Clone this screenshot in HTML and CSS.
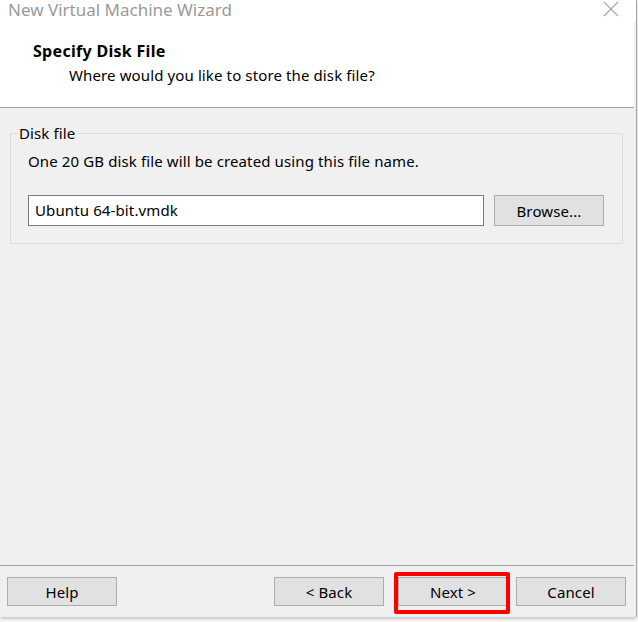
FILE: index.html
```html
<!DOCTYPE html>
<html>
<head>
<meta charset="utf-8">
<link rel="stylesheet" href="styles.css">
</head>
<body>
<div class="window">
  <div class="titlebar">
    <span class="title">New Virtual Machine Wizard</span>
    <svg class="close" width="16" height="16" viewBox="0 0 16 16"><path d="M1 1L15 15M15 1L1 15" stroke="#a6a6a6" stroke-width="1.1" fill="none"/></svg>
  </div>
  <div class="header">
    <div class="h1">Specify Disk File</div>
    <div class="sub">Where would you like to store the disk file?</div>
  </div>
  <div class="content">
    <div class="group">
      <div class="legend">Disk file</div>
      <div class="desc">One 20 GB disk file will be created using this file name.</div>
      <div class="row">
        <div class="input">Ubuntu 64-bit.vmdk</div>
        <div class="btn browse">Browse...</div>
      </div>
    </div>
  </div>
  <div class="footer">
    <div class="btn">Help</div>
    <div class="spacer"></div>
    <div class="btn">&lt; Back</div>
    <div class="btn next">Next &gt;<span class="highlight"></span></div>
    <div class="btn">Cancel</div>
  </div>
</div>
</body>
</html>
```

FILE: styles.css
```css
html, body {
  margin: 0;
  padding: 0;
  background: #ffffff;
}
body {
  font-family: "Noto Sans", "Open Sans", sans-serif;
  font-size: 15px;
  letter-spacing: 0.12px;
  color: #000;
  width: 638px;
  height: 622px;
  overflow: hidden;
}
.window {
  width: 636px;
  height: 617px;
  border-right: 1px solid #a8a8a8;
  background: #f0f0f0;
  display: flex;
  flex-direction: column;
  box-shadow: 0 2px 4px rgba(0,0,0,0.25);
  position: relative;
}
.titlebar {
  height: 22px;
  background: #fff;
  display: flex;
  align-items: flex-start;
  position: relative;
}
.title {
  font-size: 17px;
  line-height: 20px;
  letter-spacing: 0;
  color: #9a9a9a;
  margin-left: 8px;
}
.close {
  position: absolute;
  left: 603px;
  top: 1px;
}
.header {
  height: 86px;
  background: #fff;
  border-bottom: 1px solid #a0a0a0;
  margin-right: 2px;
  box-sizing: border-box;
}
.h1 {
  font-weight: bold;
  font-size: 16px;
  letter-spacing: 0.3px;
  line-height: 20px;
  margin: 19px 0 0 33px;
}
.sub {
  line-height: 20px;
  margin: 4px 0 0 69px;
}
.content {
  flex: 1;
  padding: 24px 13px 0 10px;
  margin-top: 1px;
}
.group {
  border: 1px solid #dcdcdc;
  padding: 0 17px 17px 17px;
  display: flex;
  flex-direction: column;
  align-items: flex-start;
}
.legend {
  background: #f0f0f0;
  padding: 0 2px 0 1px;
  margin: -11px 0 0 -10px;
  line-height: 20px;
}
.desc {
  line-height: 20px;
  margin-top: 8px;
}
.row {
  display: flex;
  margin-top: 24px;
  gap: 10px;
}
.input {
  width: 456px;
  height: 31px;
  box-sizing: border-box;
  border: 1px solid #7a7a7a;
  background: #fff;
  padding-left: 6px;
  line-height: 28px;
}
.btn {
  width: 110px;
  height: 29px;
  box-sizing: border-box;
  border: 1px solid #adadad;
  background: #e1e1e1;
  display: flex;
  align-items: center;
  justify-content: center;
  line-height: 20px;
  position: relative;
}
.browse {
  height: 31px;
}
.footer {
  height: 52px;
  border-top: 1px solid #a0a0a0;
  margin-right: 2px;
  display: flex;
  align-items: flex-start;
  padding: 11px 0 0 7px;
  box-sizing: border-box;
}
.footer .btn + .btn {
  margin-left: 14px;
}
.footer .btn:last-child {
  margin-left: 8px;
}
.spacer {
  width: 157px;
}
.highlight {
  position: absolute;
  left: -5px;
  top: -6px;
  width: 116px;
  height: 42px;
  box-sizing: border-box;
  border: 4px solid #ff0000;
  border-radius: 2px;
}
```
